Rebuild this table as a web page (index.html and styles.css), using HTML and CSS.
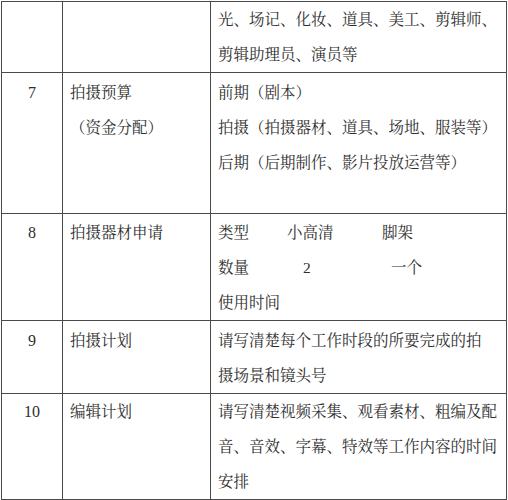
FILE: index.html
```html
<!DOCTYPE html>
<html lang="zh">
<head>
<meta charset="utf-8">
<link rel="stylesheet" href="styles.css">
</head>
<body>
<table class="plan">
  <colgroup>
    <col class="c-num">
    <col class="c-item">
    <col class="c-desc">
  </colgroup>
  <tr class="r-cont">
    <td></td>
    <td></td>
    <td class="desc first"><div>光、场记、化妆、道具、美工、剪辑师、</div><div>剪辑助理员、演员等</div></td>
  </tr>
  <tr class="r7">
    <td class="num">7</td>
    <td class="item"><div>拍摄预算</div><div>（资金分配）</div></td>
    <td class="desc"><div>前期（剧本）</div><div>拍摄（拍摄器材、道具、场地、服装等）</div><div>后期（后期制作、影片投放运营等）</div></td>
  </tr>
  <tr class="r8">
    <td class="num">8</td>
    <td class="item"><div>拍摄器材申请</div></td>
    <td class="desc">
      <div class="eq"><span class="k">类型</span><span class="v1">小高清</span><span class="v2">脚架</span></div>
      <div class="eq"><span class="k">数量</span><span class="v1 n">2</span><span class="v2 o">一个</span></div>
      <div>使用时间</div>
    </td>
  </tr>
  <tr class="r9">
    <td class="num">9</td>
    <td class="item"><div>拍摄计划</div></td>
    <td class="desc"><div>请写清楚每个工作时段的所要完成的拍</div><div>摄场景和镜头号</div></td>
  </tr>
  <tr class="r10">
    <td class="num">10</td>
    <td class="item"><div>编辑计划</div></td>
    <td class="desc"><div>请写清楚视频采集、观看素材、粗编及配</div><div>音、音效、字幕、特效等工作内容的时间</div><div>安排</div></td>
  </tr>
</table>
</body>
</html>
```

FILE: styles.css
```css
html, body {
  margin: 0;
  padding: 0;
  background: #ffffff;
}

body {
  padding: 1px 0 0 1px;
}

.plan {
  border-collapse: collapse;
  table-layout: fixed;
  width: 505px;
  font-family: "Liberation Serif", "Noto Serif CJK SC", "Noto Sans CJK SC", serif;
  font-size: 15.5px;
  line-height: 35px;
  color: #2e2e2e;
}

.c-num { width: 61px; }
.c-item { width: 148px; }
.c-desc { width: 296px; }

.plan td {
  border: 1px solid #4a4a4a;
  vertical-align: top;
  padding: 2px 0 0 7px;
  white-space: nowrap;
  overflow: hidden;
}

.plan td.num {
  text-align: center;
  padding-left: 0;
  font-size: 16px;
}

.plan td.desc {
  padding-left: 7px;
}

.plan td.first {
  padding-top: 0;
}

.r-cont { height: 71px; }
.r7 { height: 141px; }
.r8 { height: 107px; }
.r9 { height: 72px; }
.r10 { height: 106px; }

.r8 td { padding-top: 1px; }
.r10 td { padding-top: 0; }

.eq {
  display: flex;
}

.eq .k { width: 69px; }
.eq .v1 { width: 95px; }
.eq .n { padding-left: 16px; width: 79px; }
.eq .o { padding-left: 9px; }
```
